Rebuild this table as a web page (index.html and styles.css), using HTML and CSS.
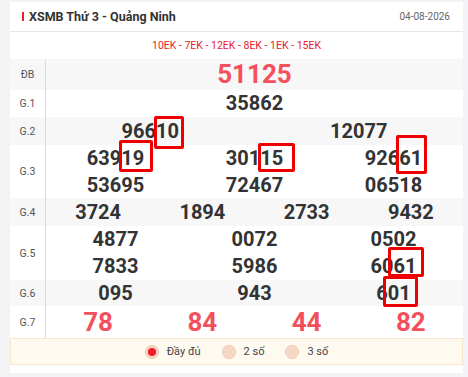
FILE: index.html
```html
<!DOCTYPE html>
<html lang="vi">
<head>
<meta charset="utf-8">
<title>XSMB</title>
<link rel="stylesheet" href="styles.css">
</head>
<body>
<div class="card">
  <div class="head">
    <h2 class="title">XSMB Thứ 3 - Quảng Ninh</h2>
    <span class="date">04-08-2026</span>
  </div>
  <div class="codes">10EK - 7EK - 12EK - 8EK - 1EK - 15EK</div>
  <div class="table">
    <div class="row alt r-db"><div class="lbl">ĐB</div><div class="nums c1 big red"><span>51125</span></div></div>
    <div class="row r-g1"><div class="lbl">G.1</div><div class="nums c1"><span>35862</span></div></div>
    <div class="row alt r-g2"><div class="lbl">G.2</div><div class="nums c2"><span>96610</span><span>12077</span></div></div>
    <div class="row r-g3"><div class="lbl">G.3</div><div class="nums c3"><span>63919</span><span>30115</span><span>92661</span><span>53695</span><span>72467</span><span>06518</span></div></div>
    <div class="row alt r-g4"><div class="lbl">G.4</div><div class="nums c4"><span>3724</span><span>1894</span><span>2733</span><span>9432</span></div></div>
    <div class="row r-g5"><div class="lbl">G.5</div><div class="nums c3"><span>4877</span><span>0072</span><span>0502</span><span>7833</span><span>5986</span><span>6061</span></div></div>
    <div class="row alt r-g6"><div class="lbl">G.6</div><div class="nums c3"><span>095</span><span>943</span><span>601</span></div></div>
    <div class="row r-g7"><div class="lbl">G.7</div><div class="nums c4 big red"><span>78</span><span>84</span><span>44</span><span>82</span></div></div>
    <div class="mark b1"></div>
    <div class="mark b2"></div>
    <div class="mark b3"></div>
    <div class="mark b4"></div>
    <div class="mark b5"></div>
    <div class="mark b6"></div>
  </div>
  <div class="opts">
    <label class="opt"><span class="radio on"></span>Đầy đủ</label>
    <label class="opt"><span class="radio"></span>2 số</label>
    <label class="opt"><span class="radio"></span>3 số</label>
  </div>
</div>
</body>
</html>
```
FILE: styles.css
```css
html, body {
  margin: 0;
  padding: 0;
}
body {
  background: #f3f3f5;
  font-family: Roboto, "Liberation Sans", Arial, sans-serif;
  color: #333;
  width: 468px;
  height: 377px;
  overflow: hidden;
}
.card {
  margin: 2px 0 0 10px;
  width: 453px;
  background: #fff;
  padding-bottom: 8px;
}
.head {
  height: 29px;
  border-bottom: 1px solid #e6e6e6;
  display: flex;
  align-items: center;
  justify-content: space-between;
  padding: 0 13px 0 12px;
}
.title {
  margin: 0;
  font-size: 12.5px;
  font-weight: 700;
  color: #333;
  display: flex;
  align-items: center;
}
.title::before {
  content: "";
  width: 2px;
  height: 9px;
  background: #e8202a;
  margin-right: 5px;
}
.date {
  font-size: 10px;
  color: #666;
}
.codes {
  height: 27px;
  line-height: 27px;
  text-align: center;
  font-size: 10.5px;
  color: #e8202a;
}
.table {
  position: relative;
}
.row {
  display: flex;
}
.row.alt {
  background: #f7f7f8;
}
.lbl {
  width: 35px;
  border-right: 1px solid #dcdcdc;
  display: flex;
  align-items: center;
  justify-content: center;
  font-size: 10.5px;
  color: #555;
}
.nums {
  flex: 1;
  display: grid;
  font-size: 20px;
  font-weight: 700;
  line-height: 27px;
  text-align: center;
  color: #333;
}
.c1 { grid-template-columns: 1fr; }
.c2 { grid-template-columns: repeat(2, 1fr); }
.c3 { grid-template-columns: repeat(3, 1fr); }
.c4 { grid-template-columns: repeat(4, 1fr); }
.big { font-size: 26px; }
.red { color: #f4505c; }
.r-db .nums { line-height: 31px; }
.r-g2 .nums { line-height: 28px; }
.r-g3 .nums { line-height: 26.5px; }
.r-g4 .nums { line-height: 28px; }
.r-g6 .nums { line-height: 26px; }
.r-g7 .nums { line-height: 32px; }
.mark {
  position: absolute;
  border: 3px solid #ee0000;
  border-radius: 2px;
  box-sizing: border-box;
}
.b1 { left: 144px; top: 57px; width: 30px; height: 33px; }
.b2 { left: 109px; top: 81px; width: 34px; height: 32px; }
.b3 { left: 248px; top: 84px; width: 37px; height: 29px; }
.b4 { left: 386px; top: 76px; width: 31px; height: 39px; }
.b5 { left: 378px; top: 188px; width: 36px; height: 30px; }
.b6 { left: 373px; top: 217px; width: 35px; height: 31px; }
.opts {
  height: 25px;
  background: #fffaf0;
  border: 1px solid #f6e6cc;
  display: flex;
  justify-content: center;
  align-items: center;
  gap: 21px;
  font-size: 11px;
  color: #444;
}
.opt {
  display: flex;
  align-items: center;
  gap: 8px;
}
.radio {
  width: 14px;
  height: 14px;
  border-radius: 50%;
  background: #f6d8c4;
  box-sizing: border-box;
  border: 1px solid #efc9b0;
  display: flex;
  align-items: center;
  justify-content: center;
}
.radio.on::after {
  content: "";
  width: 8px;
  height: 8px;
  border-radius: 50%;
  background: #ec1c2c;
}
```
